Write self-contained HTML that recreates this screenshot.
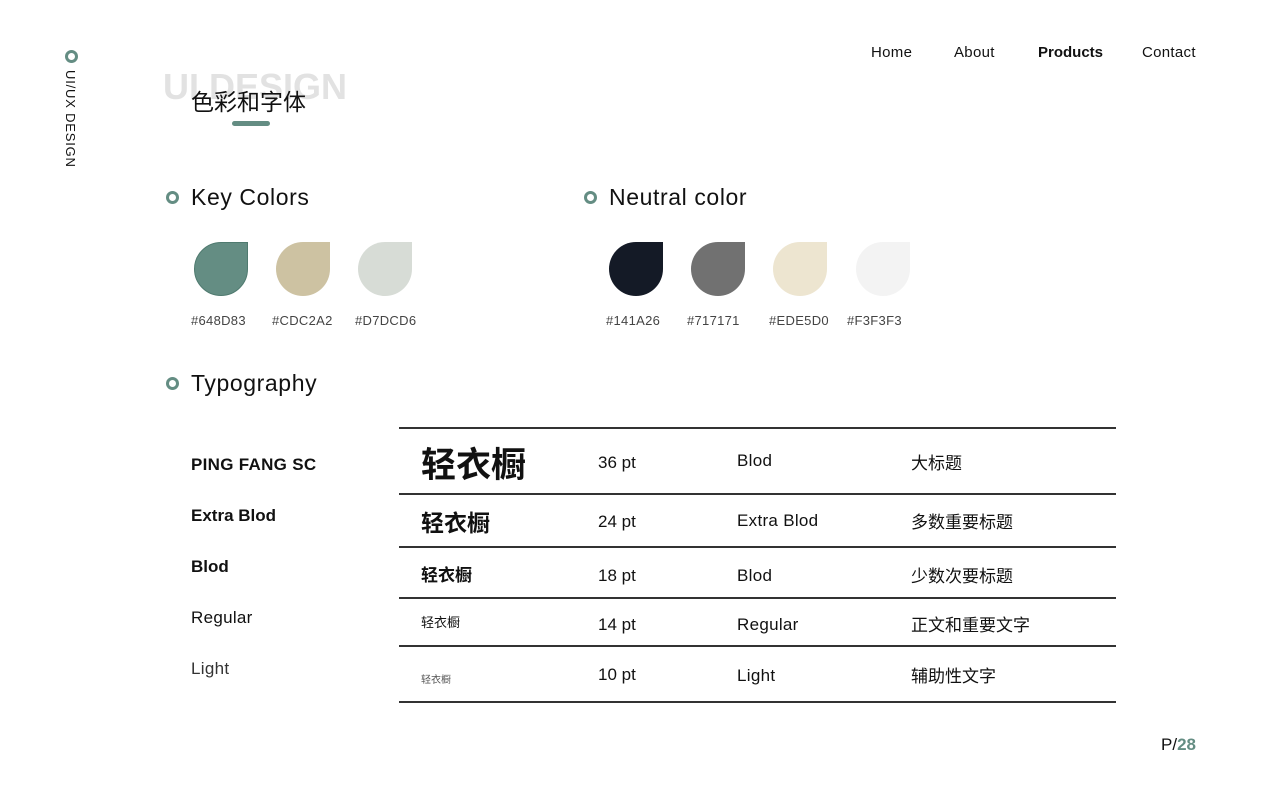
<!DOCTYPE html>
<html><head><meta charset="utf-8"><style>
*{margin:0;padding:0;box-sizing:border-box}
body{width:1280px;height:800px;background:#fff;position:relative;overflow:hidden;font-family:"Liberation Sans","Noto Sans CJK SC",sans-serif;color:#111}
.a{position:absolute;white-space:nowrap}
.ring{position:absolute;width:13px;height:13px;border:3px solid #648D83;border-radius:50%}
.drop{position:absolute;width:54px;height:54px;border-radius:50% 0 50% 50%}
.hex{position:absolute;font-size:13px;color:#444;top:313px;letter-spacing:.3px}
.line{position:absolute;left:399px;width:717px;height:2px;background:#333}
.h2{font-size:23px;color:#111;letter-spacing:.6px}
.cn{font-size:17px}
</style></head><body>
<div class="ring" style="left:65px;top:50px"></div>
<div class="a" style="left:63px;top:70px;writing-mode:vertical-rl;font-size:13px;letter-spacing:.8px">UI/UX DESIGN</div>
<div class="a" style="left:163px;top:66px;font-size:36px;font-weight:bold;color:#e2e2e2;letter-spacing:0">UI DESIGN</div>
<div class="a" style="left:191px;top:83px;font-size:23px">色彩和字体</div>
<div class="a" style="left:232px;top:121px;width:38px;height:5px;border-radius:3px;background:#648D83"></div>
<div class="a" style="left:871px;top:44px;font-size:15px;letter-spacing:.3px">Home</div>
<div class="a" style="left:954px;top:44px;font-size:15px;letter-spacing:.3px">About</div>
<div class="a" style="left:1038px;top:44px;font-size:15px;font-weight:bold">Products</div>
<div class="a" style="left:1142px;top:44px;font-size:15px;letter-spacing:.3px">Contact</div>

<div class="ring" style="left:166px;top:191px"></div>
<div class="a h2" style="left:191px;top:184px">Key Colors</div>
<div class="ring" style="left:584px;top:191px"></div>
<div class="a h2" style="left:609px;top:184px">Neutral color</div>

<div class="drop" style="left:194px;top:242px;background:#648D83;border:1px solid #4f7a6f"></div>
<div class="drop" style="left:276px;top:242px;background:#CDC2A2"></div>
<div class="drop" style="left:358px;top:242px;background:#D7DCD6"></div>
<div class="hex" style="left:191px">#648D83</div>
<div class="hex" style="left:272px">#CDC2A2</div>
<div class="hex" style="left:355px">#D7DCD6</div>

<div class="drop" style="left:609px;top:242px;background:#141A26"></div>
<div class="drop" style="left:691px;top:242px;background:#717171"></div>
<div class="drop" style="left:773px;top:242px;background:#EDE5D0"></div>
<div class="drop" style="left:856px;top:242px;background:#F3F3F3"></div>
<div class="hex" style="left:606px">#141A26</div>
<div class="hex" style="left:687px">#717171</div>
<div class="hex" style="left:769px">#EDE5D0</div>
<div class="hex" style="left:847px">#F3F3F3</div>

<div class="ring" style="left:166px;top:377px"></div>
<div class="a h2" style="left:191px;top:370px">Typography</div>

<div class="a" style="left:191px;top:455px;font-size:17px;font-weight:bold;letter-spacing:.3px">PING FANG SC</div>
<div class="a" style="left:191px;top:506px;font-size:17px;font-weight:bold">Extra Blod</div>
<div class="a" style="left:191px;top:557px;font-size:17px;font-weight:bold">Blod</div>
<div class="a" style="left:191px;top:608px;font-size:17px;letter-spacing:.3px">Regular</div>
<div class="a" style="left:191px;top:659px;font-size:17px;color:#333;letter-spacing:.3px">Light</div>

<div class="line" style="top:427px"></div>
<div class="line" style="top:493px"></div>
<div class="line" style="top:546px"></div>
<div class="line" style="top:597px"></div>
<div class="line" style="top:645px"></div>
<div class="line" style="top:701px"></div>

<div class="a" style="left:421px;top:437px;font-size:35px;font-weight:bold">轻衣橱</div>
<div class="a" style="left:421px;top:504px;font-size:23px;font-weight:bold">轻衣橱</div>
<div class="a" style="left:421px;top:561px;font-size:17px;font-weight:bold">轻衣橱</div>
<div class="a" style="left:421px;top:612px;font-size:13px">轻衣橱</div>
<div class="a" style="left:421px;top:671px;font-size:10px;color:#555">轻衣橱</div>

<div class="a" style="left:598px;top:453px;font-size:17px">36 pt</div>
<div class="a" style="left:598px;top:512px;font-size:17px">24 pt</div>
<div class="a" style="left:598px;top:566px;font-size:17px">18 pt</div>
<div class="a" style="left:598px;top:615px;font-size:17px">14 pt</div>
<div class="a" style="left:598px;top:665px;font-size:17px">10 pt</div>

<div class="a" style="left:737px;top:451px;font-size:17px;letter-spacing:.3px">Blod</div>
<div class="a" style="left:737px;top:511px;font-size:17px;letter-spacing:.3px">Extra Blod</div>
<div class="a" style="left:737px;top:566px;font-size:17px;letter-spacing:.3px">Blod</div>
<div class="a" style="left:737px;top:615px;font-size:17px;letter-spacing:.3px">Regular</div>
<div class="a" style="left:737px;top:666px;font-size:17px;letter-spacing:.3px">Light</div>

<div class="a cn" style="left:911px;top:449px">大标题</div>
<div class="a cn" style="left:911px;top:508px">多数重要标题</div>
<div class="a cn" style="left:911px;top:562px">少数次要标题</div>
<div class="a cn" style="left:911px;top:611px">正文和重要文字</div>
<div class="a cn" style="left:911px;top:662px">辅助性文字</div>

<div class="a" style="left:1161px;top:735px;font-size:17px">P/<span style="color:#648D83;font-weight:bold">28</span></div>
</body></html>
